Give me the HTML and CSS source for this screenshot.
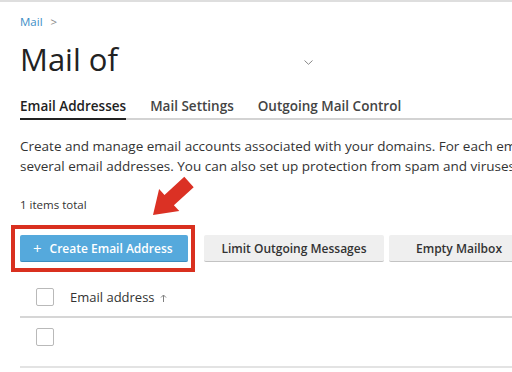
FILE: index.html
```html
<!DOCTYPE html>
<html lang="en">
<head>
<meta charset="utf-8">
<title>Mail</title>
<link rel="stylesheet" href="styles.css">
</head>
<body>
<div class="page">
  <nav class="breadcrumb"><a href="#">Mail</a><span class="sep">&gt;</span></nav>
  <div class="title-row">
    <h1 class="title">Mail of</h1>
    <span class="domain-select">
      <svg width="9" height="5" viewBox="0 0 9 5"><path d="M0.5 0.5 L4.5 4.3 L8.5 0.5" fill="none" stroke="#888" stroke-width="1"/></svg>
    </span>
  </div>
  <div class="tabs">
    <a class="tab active" href="#">Email Addresses</a>
    <a class="tab" href="#">Mail Settings</a>
    <a class="tab" href="#">Outgoing Mail Control</a>
  </div>
  <p class="intro">Create and manage email accounts associated with your domains. For each email account you can add several email addresses. You can also set up protection from spam and viruses.</p>
  <div class="total">1 items total</div>
  <div class="toolbar">
    <button class="btn primary"><span class="plus">+</span>Create Email Address</button>
    <button class="btn limit">Limit Outgoing Messages</button>
    <button class="btn empty">Empty Mailbox</button>
  </div>
  <div class="table">
    <div class="row head">
      <span class="check"></span>
      <span class="col">Email address
        <svg class="sort" width="7" height="8" viewBox="0 0 7 8"><path d="M3.5 8 V1.2 M1 3.5 L3.5 1 L6 3.5" fill="none" stroke="#808080" stroke-width="1"/></svg>
      </span>
    </div>
    <div class="row">
      <span class="check"></span>
    </div>
  </div>
  <div class="highlight"></div>
  <svg class="pointer" width="512" height="372" viewBox="0 0 512 372">
    <polygon points="184.3,176.8 193.7,187.2 173.9,205.3 179.3,211.1 153,215 159.1,189 164.5,194.9" fill="#db3124"/>
  </svg>
</div>
</body>
</html>
```

FILE: styles.css
```css
html, body {
  margin: 0;
  padding: 0;
  overflow: hidden;
  background: #fff;
}
body {
  font-family: "Open Sans", "Noto Sans", sans-serif;
  color: #333;
}
.page {
  position: relative;
  width: 900px;
  height: 370px;
  border-top: 2px solid #dedede;
  padding: 12px 0 0 20px;
  box-sizing: content-box;
}
.breadcrumb {
  font-size: 11.5px;
  line-height: 16px;
}
.breadcrumb a {
  color: #3d8ec6;
  text-decoration: none;
}
.breadcrumb .sep {
  color: #888;
  margin-left: 8px;
}
.title-row {
  display: flex;
  align-items: center;
  margin-top: 9px;
}
.title {
  margin: 0;
  font-size: 31px;
  line-height: 40px;
  font-weight: 400;
  color: #222;
}
.domain-select {
  display: inline-flex;
  justify-content: flex-end;
  width: 195px;
  padding-top: 6px;
}
.tabs {
  display: flex;
  gap: 24px;
  margin-top: 17px;
  border-bottom: 2px solid #d3d3d3;
}
.tab {
  font-size: 13.5px;
  line-height: 20px;
  font-weight: 600;
  color: #444;
  text-decoration: none;
  padding-bottom: 2px;
  margin-bottom: -2px;
  border-bottom: 2px solid transparent;
}
.tab.active {
  color: #222;
  border-bottom-color: #222;
}
.intro {
  margin: 16px 0 0;
  width: 660px;
  font-size: 13.5px;
  line-height: 20px;
  color: #333;
}
.total {
  margin-top: 21px;
  font-size: 11.5px;
  line-height: 16px;
  color: #333;
}
.toolbar {
  display: flex;
  margin-top: 22px;
}
.btn {
  display: inline-flex;
  align-items: center;
  justify-content: center;
  white-space: nowrap;
  font-family: inherit;
  font-size: 12px;
  font-weight: 600;
  height: 27px;
  padding: 0;
  border: 0;
  border-bottom: 1px solid #c3c3c3;
  border-radius: 2px;
  background: #efefef;
  color: #333;
  margin-right: 5px;
}
.btn.primary {
  width: 168px;
  justify-content: flex-start;
  padding-left: 13px;
  box-sizing: border-box;
  background: #55a9dc;
  border-bottom-color: #3b8dc0;
  color: #fff;
  font-size: 12px;
  margin-right: 16px;
}
.btn .plus {
  font-size: 15px;
  font-weight: 400;
  margin-right: 8px;
}
.btn.limit { width: 180px; }
.btn.empty { width: 140px; }
.table {
  margin-top: 10px;
}
.row {
  display: flex;
  align-items: flex-start;
  gap: 16px;
  padding: 16px 16px 0;
  height: 50px;
  box-sizing: border-box;
  border-bottom: 2px solid #d6d6d6;
}
.row.head {
  height: 46px;
  padding-top: 16px;
}
.row:not(.head) {
  padding-top: 10px;
  border-bottom-color: #e3e3e3;
}
.check {
  width: 18px;
  height: 18px;
  box-sizing: border-box;
  border: 1px solid #b9b9b9;
  border-radius: 2px;
  background: #fff;
}
.col {
  font-size: 13px;
  line-height: 18px;
  color: #333;
}
.sort {
  margin-left: 2px;
}
.highlight {
  position: absolute;
  left: 11px;
  top: 223px;
  width: 176px;
  height: 39px;
  border: 4px solid #d9301f;
}
.pointer {
  position: absolute;
  left: 0;
  top: -2px;
}
```
